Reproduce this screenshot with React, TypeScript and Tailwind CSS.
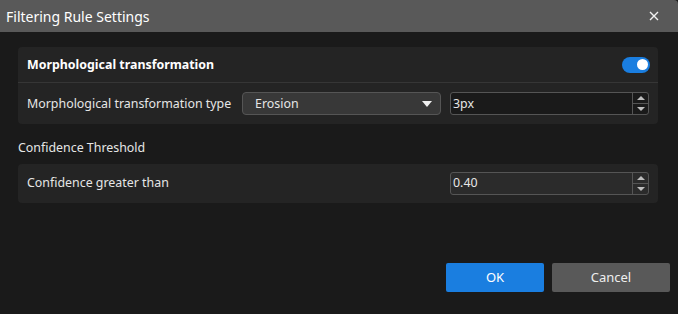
import React from 'react';

const Spinner: React.FC = () => (
  <div className="flex w-[16px] flex-col border-l border-[#555]">
    <div className="flex flex-1 items-center justify-center border-b border-[#555]">
      <svg width="8" height="4" viewBox="0 0 8 4"><path d="M0 4 L4 0 L8 4 Z" fill="#bdbdbd" /></svg>
    </div>
    <div className="flex flex-1 items-center justify-center">
      <svg width="8" height="4" viewBox="0 0 8 4"><path d="M0 0 L8 0 L4 4 Z" fill="#bdbdbd" /></svg>
    </div>
  </div>
);

const NumberInput: React.FC<{ value: string; bg: string }> = ({ value, bg }) => (
  <div className={`flex h-[23px] w-[199px] rounded-[3px] border border-[#555] ${bg}`}>
    <div className="flex flex-1 items-center pl-[2px] pt-[1px] text-[12.4px] text-[#e6e6e6]">{value}</div>
    <Spinner />
  </div>
);

const App: React.FC = () => {
  return (
    <div
      className="flex h-[314px] w-[678px] flex-col bg-[#1a1a1a] text-[#e6e6e6]"
      style={{ fontFamily: '"Noto Sans", "Open Sans", sans-serif' }}
    >
      {/* title bar */}
      <div className="flex h-[32px] items-center justify-between rounded-tr-[4px] bg-[#595959] pl-[6px] pr-[19px]">
        <span className="text-[14px] text-white">Filtering Rule Settings</span>
        <svg width="10" height="10" viewBox="0 0 10 10">
          <path d="M1 1 L9 9 M9 1 L1 9" stroke="#f2f2f2" strokeWidth="1.4" />
        </svg>
      </div>

      <div className="flex flex-1 flex-col pl-[18px] pr-[20px] pt-[15px]">
        {/* morphological panel */}
        <div className="rounded-[4px] bg-[#242424]">
          <div className="flex h-[36px] items-center justify-between border-b border-[#363636] pl-[9px] pr-[8px] pt-[2px]">
            <span className="text-[12.4px] font-bold text-white">Morphological transformation</span>
            <div className="mb-[2px] flex h-[16px] w-[28px] items-center justify-end rounded-full bg-[#1a7ee0] pr-[2px]">
              <div className="h-[11px] w-[11px] rounded-full bg-white" />
            </div>
          </div>
          <div className="flex h-[41px] items-center pl-[9px] pr-[9px]">
            <span className="w-[215px] pt-[1px] text-[12.4px]">Morphological transformation type</span>
            <div className="flex h-[23px] w-[199px] items-center justify-between rounded-[4px] border border-[#555] bg-[#383838] pl-[12px] pr-[8px]">
              <span className="pt-[1px] text-[12.4px]">Erosion</span>
              <svg width="10" height="6" viewBox="0 0 10 6"><path d="M0 0 L10 0 L5 6 Z" fill="#f0f0f0" /></svg>
            </div>
            <div className="ml-[9px]">
              <NumberInput value="3px" bg="bg-[#1a1a1a]" />
            </div>
          </div>
        </div>

        <div className="mt-[15px] text-[12.4px]">Confidence Threshold</div>

        <div className="mt-[6px] flex h-[39px] items-center justify-between rounded-[4px] bg-[#242424] pl-[9px] pr-[9px]">
          <span className="pt-[1px] text-[12.4px]">Confidence greater than</span>
          <NumberInput value="0.40" bg="bg-[#2b2b2b]" />
        </div>

        <div className="mb-[22px] mr-[-12px] mt-auto flex justify-end gap-[8px]">
          <button className="h-[29px] w-[98px] rounded-[2px] bg-[#1a7ee0] text-[13px] text-white">OK</button>
          <button className="h-[29px] w-[118px] rounded-[2px] bg-[#595959] text-[13px] text-[#eeeeee]">Cancel</button>
        </div>
      </div>
    </div>
  );
};

export default App;
